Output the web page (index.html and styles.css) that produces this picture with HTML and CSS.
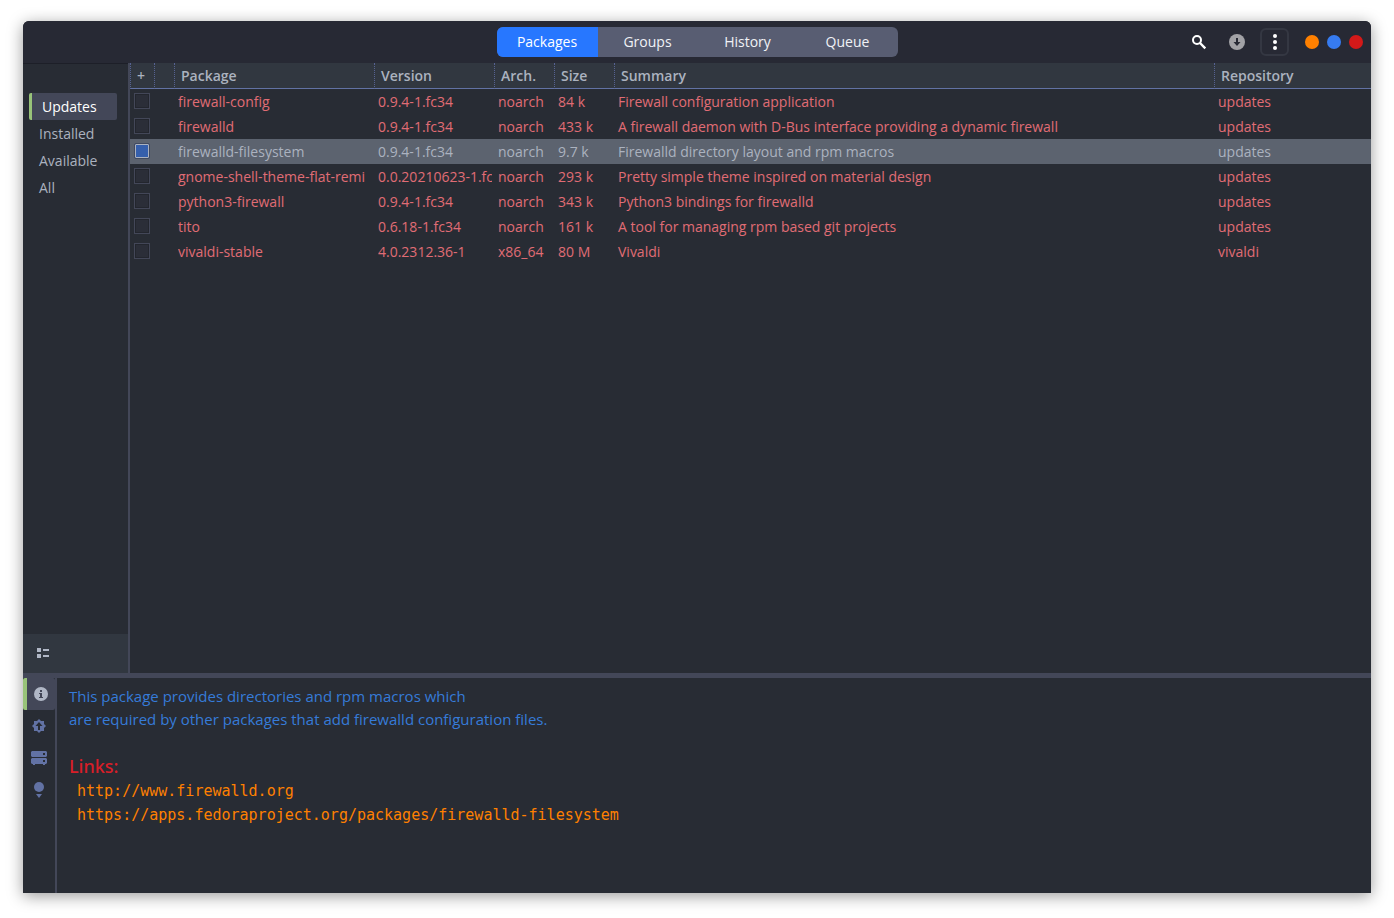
FILE: index.html
```
<!DOCTYPE html>
<html lang="en">
<head>
  <meta charset="UTF-8">
  <title>Package Manager</title>
  <link rel="stylesheet" href="styles.css">
</head>
<body>
<div class="window">

  <header class="headerbar">
    <nav class="switcher">
      <button class="active">Packages</button>
      <button>Groups</button>
      <button>History</button>
      <button>Queue</button>
    </nav>
    <div class="tools">
      <button class="tool" aria-label="Search">
        <svg width="16" height="16" viewBox="0 0 16 16"><circle cx="6" cy="6" r="4" fill="none" stroke="#fff" stroke-width="2"/><path d="M9 9l5.300 5.300" stroke="#fff" stroke-width="2.400"/></svg>
      </button>
      <button class="tool" aria-label="Apply">
        <svg width="16" height="16" viewBox="0 0 16 16"><circle cx="8" cy="8" r="8" fill="#a2a2a6"/><path d="M7 4h2v4h2.500L8 12 4.500 8H7z" fill="#272934"/></svg>
      </button>
      <button class="tool menu" aria-label="Menu">
        <svg width="16" height="16" viewBox="0 0 16 16" fill="#fff"><circle cx="8" cy="2" r="2"/><circle cx="8" cy="8" r="2"/><circle cx="8" cy="14" r="2"/></svg>
      </button>
      <div class="controls">
        <button class="min" aria-label="Minimize"></button>
        <button class="max" aria-label="Maximize"></button>
        <button class="close" aria-label="Close"></button>
      </div>
    </div>
  </header>

  <div class="top">
    <aside class="sidebar">
      <nav class="filters">
        <button class="active">Updates</button>
        <button>Installed</button>
        <button>Available</button>
        <button>All</button>
      </nav>
      <div class="sidebar-footer">
        <button aria-label="Toggle list">
          <svg width="12" height="10" viewBox="0 0 12 10" fill="#b0b7c6"><path d="M0 0h4v4H0zM6 1h6v2H6zM0 6h4v4H0zM6 7h6v2H6z"/></svg>
        </button>
      </div>
    </aside>

    <main class="packages">
      <table>
        <colgroup>
          <col class="c-check"><col class="c-state"><col class="c-name"><col class="c-version"><col class="c-arch"><col class="c-size"><col class="c-summary"><col>
        </colgroup>
        <thead>
          <tr><th class="plus">+</th><th></th><th>Package</th><th>Version</th><th>Arch.</th><th>Size</th><th>Summary</th><th>Repository</th></tr>
        </thead>
        <tbody>
          <tr><td class="check"><input type="checkbox" aria-label="firewall-config"></td><td></td><td><div>firewall-config</div></td><td><div>0.9.4-1.fc34</div></td><td>noarch</td><td>84 k</td><td>Firewall configuration application</td><td>updates</td></tr>
          <tr><td class="check"><input type="checkbox" aria-label="firewalld"></td><td></td><td><div>firewalld</div></td><td><div>0.9.4-1.fc34</div></td><td>noarch</td><td>433 k</td><td>A firewall daemon with D-Bus interface providing a dynamic firewall</td><td>updates</td></tr>
          <tr class="selected"><td class="check"><input type="checkbox" aria-label="firewalld-filesystem" checked></td><td></td><td><div>firewalld-filesystem</div></td><td><div>0.9.4-1.fc34</div></td><td>noarch</td><td>9.7 k</td><td>Firewalld directory layout and rpm macros</td><td>updates</td></tr>
          <tr><td class="check"><input type="checkbox" aria-label="gnome-shell-theme-flat-remi"></td><td></td><td><div>gnome-shell-theme-flat-remi</div></td><td><div>0.0.20210623-1.fc</div></td><td>noarch</td><td>293 k</td><td>Pretty simple theme inspired on material design</td><td>updates</td></tr>
          <tr><td class="check"><input type="checkbox" aria-label="python3-firewall"></td><td></td><td><div>python3-firewall</div></td><td><div>0.9.4-1.fc34</div></td><td>noarch</td><td>343 k</td><td>Python3 bindings for firewalld</td><td>updates</td></tr>
          <tr><td class="check"><input type="checkbox" aria-label="tito"></td><td></td><td><div>tito</div></td><td><div>0.6.18-1.fc34</div></td><td>noarch</td><td>161 k</td><td>A tool for managing rpm based git projects</td><td>updates</td></tr>
          <tr><td class="check"><input type="checkbox" aria-label="vivaldi-stable"></td><td></td><td><div>vivaldi-stable</div></td><td><div>4.0.2312.36-1</div></td><td>x86_64</td><td>80 M</td><td>Vivaldi</td><td>vivaldi</td></tr>
        </tbody>
      </table>
    </main>
  </div>

  <div class="bottom">
    <nav class="info-tabs">
      <button class="active" aria-label="Description">
        <svg width="16" height="16" viewBox="0 0 16 16"><circle cx="8" cy="8" r="7" fill="#b0b7c6"/><path d="M7 4h2v2H7zM6 7h3v4h1v1H6v-1h1V8H6z" fill="#434758"/></svg>
      </button>
      <button aria-label="Update info">
        <svg width="16" height="16" viewBox="0 0 16 16"><path d="M8 1l2 2h3v3l2 2-2 2v3h-3l-2 2-2-2H3v-3L1 8l2-2V3h3z" fill="#6272a4"/><path d="M8 4l3.500 4H9v4H7V8H4.500z" fill="#282c34"/></svg>
      </button>
      <button aria-label="Files">
        <svg width="16" height="16" viewBox="0 0 16 16"><path d="M1 1h14l1 1v4l-1 1H1L0 6V2zM1 8h14l1 1v4l-1 1H1l-1-1V9zM2 14h2v1H2zM12 14h2v1h-2z" fill="#6272a4"/><path d="M12 3h2v2h-2zM12 10h2v2h-2z" fill="#282c34"/></svg>
      </button>
      <button aria-label="Dependencies">
        <svg width="16" height="16" viewBox="0 0 16 16" fill="#6272a4"><circle cx="8" cy="5" r="5"/><path d="M5 12h6l-3 4z"/></svg>
      </button>
    </nav>
    <section class="info">
      <p>This package provides directories and rpm macros which<br>are required by other packages that add firewalld configuration files.</p>
      <h2>Links:</h2>
      <ul>
        <li><a href="http://www.firewalld.org">http://www.firewalld.org</a></li>
        <li><a href="https://apps.fedoraproject.org/packages/firewalld-filesystem">https://apps.fedoraproject.org/packages/firewalld-filesystem</a></li>
      </ul>
    </section>
  </div>

</div>
</body>
</html>
```
FILE: styles.css
```
* { box-sizing: border-box; }
body {
  margin: 0;
  padding: 21px 23px 25px;
  min-height: 100vh;
  display: flex;
  background: #fff;
  color: #abb2bf;
  font: 14px/23px "Open Sans", "Noto Sans", sans-serif;
}
button {
  padding: 0;
  border: 0;
  background: none;
  color: inherit;
  font: inherit;
}
svg { display: block; }

.window {
  flex: 1;
  min-width: 0;
  display: flex;
  flex-direction: column;
  background: #282c34;
  border-radius: 6px 6px 0 0;
  box-shadow: 0 3px 16px rgba(0, 0, 0, 0.4);
  overflow: hidden;
}

/* header bar */
.headerbar {
  display: grid;
  grid-template-columns: 1fr auto 1fr;
  align-items: center;
  height: 42px;
  background: #272934;
}
.switcher {
  grid-column: 2;
  display: flex;
  background: #585d72;
  border-radius: 6px;
  overflow: hidden;
}
.switcher button {
  width: 100px;
  height: 30px;
  padding-bottom: 2px;
  color: #f0f2f6;
}
.switcher .active { width: 101px; background: #2777ff; color: #fff; }
.tools {
  display: flex;
  justify-content: flex-end;
  align-items: center;
  gap: 16px;
  padding-right: 8px;
}
.tool {
  display: flex;
  align-items: center;
  justify-content: center;
  width: 22px;
  height: 28px;
}
.menu {
  width: 29px;
  margin-left: -4px;
  border: 2px solid #343742;
  border-radius: 6px;
}
.controls { display: flex; gap: 8px; }
.controls button { width: 14px; height: 14px; border-radius: 50%; }
.min { background: #ff8000; }
.max { background: #367bf0; }
.close { background: #d41919; }

/* upper pane */
.top { flex: 1; display: flex; }
.sidebar {
  width: 107px;
  display: flex;
  flex-direction: column;
  border-right: 2px solid #434758;
}
.filters {
  flex: 1;
  padding: 29px 11px 0 6px;
  border-top: 1px solid #1d1f28;
}
.filters button {
  display: block;
  width: 100%;
  height: 27px;
  padding-left: 10px;
  text-align: left;
}
.filters .active {
  background: #434758;
  border-left: 3px solid #98c379;
  border-radius: 2px;
  color: #fff;
}
.sidebar-footer {
  display: flex;
  align-items: center;
  height: 39px;
  padding: 0 0 2px 14px;
  background: #313740;
}

.packages { flex: 1; min-width: 0; }
table {
  width: 100%;
  table-layout: fixed;
  border-collapse: separate;
  border-spacing: 0;
}
.c-check { width: 24px; }
.c-state { width: 20px; }
.c-name { width: 200px; }
.c-version { width: 120px; }
.c-arch, .c-size { width: 60px; }
.c-summary { width: 600px; }
th {
  height: 26px;
  padding: 0 0 0 6px;
  background: #313740;
  border-left: 1px dotted #566292;
  border-bottom: 1px solid #6272a4;
  font-weight: 600;
  text-align: left;
}
td {
  height: 25px;
  padding: 0 2px 0 4px;
  color: #e06c75;
  white-space: nowrap;
}
td div { overflow: hidden; }
td.check { padding-bottom: 2px; }
.check input {
  appearance: none;
  display: block;
  width: 16px;
  height: 16px;
  margin: 0;
  border: 1px solid #434758;
  background: #2b2e38;
  box-shadow: inset 0 0 0 1px #23262e;
}
.check input:checked {
  border-color: #414a60;
  border-radius: 2px;
  background: #355fac;
  box-shadow: inset 0 0 0 1px #abb2bf;
}
.selected td { background: #5c636f; color: #abb2bf; }

/* lower pane */
.bottom {
  display: flex;
  height: 220px;
  border-top: 5px solid #434758;
}
.info-tabs { width: 34px; border-right: 2px solid #434758; }
.info-tabs button {
  display: flex;
  align-items: center;
  justify-content: center;
  width: 32px;
  height: 32px;
}
.info-tabs .active {
  background: #434758;
  border-left: 4px solid #98c379;
  border-radius: 2px;
}
.info { padding: 7px 12px; font-size: 15px; }
.info p { margin: 0 0 23px; color: #367bd8; }
.info h2 {
  margin: 0;
  color: #d81e28;
  font-family: "Noto Sans", sans-serif;
  font-size: 18px;
  font-weight: 500;
  line-height: 25px;
}
.info ul { margin: 0; padding-left: 8px; list-style: none; }
.info a {
  color: #ff8000;
  font-family: "DejaVu Sans Mono", monospace;
  text-decoration: none;
}
```
